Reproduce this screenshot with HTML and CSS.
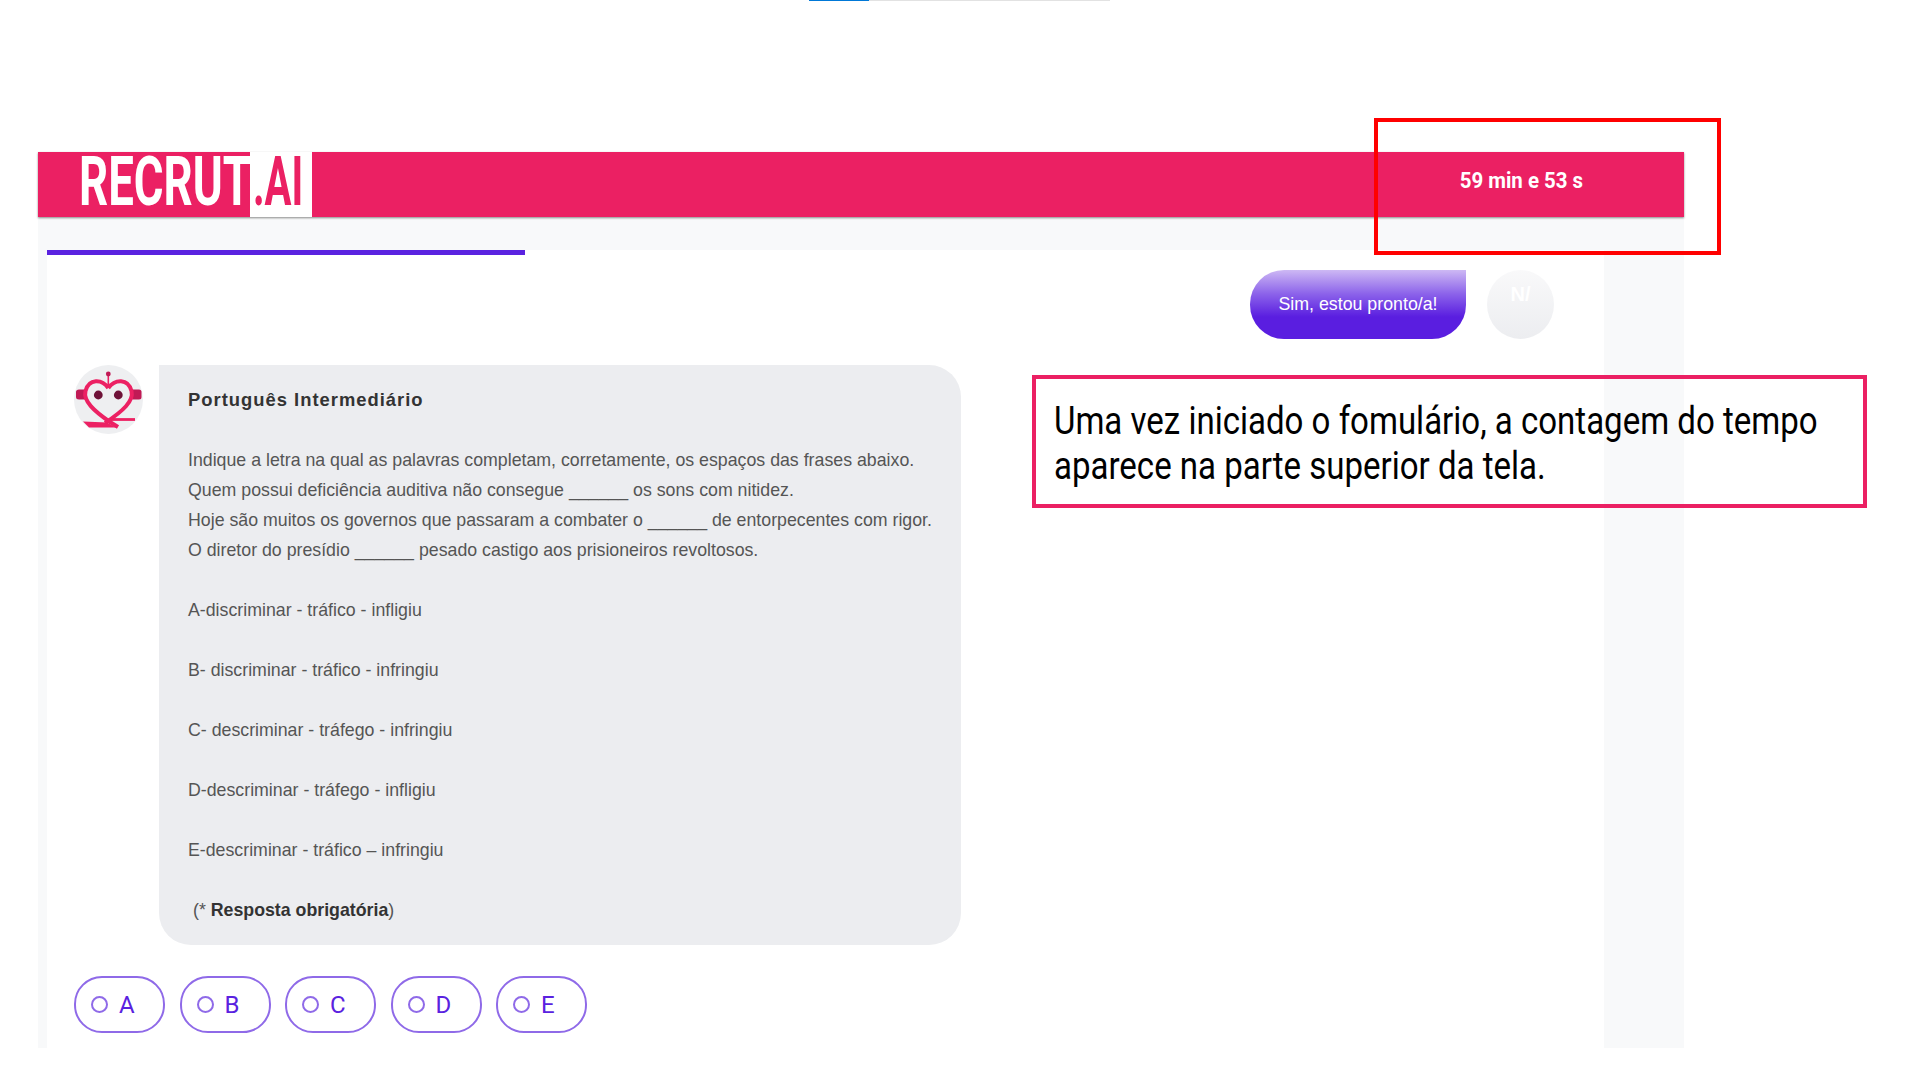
FILE: index.html
```html
<!DOCTYPE html>
<html lang="en">
<head>
    <meta charset="UTF-8">
    <title>Recrut.AI</title>
    <link rel="stylesheet" href="styles.css">
</head>
<body>
    <div class="loader"><div class="loader-fill"></div></div>

    <div class="app">
        <header class="app-header">
            <div class="logo"><span class="logo-main"><span class="logo-text">RECRUT</span></span><span class="logo-box"><span class="logo-text logo-ai">.AI</span></span></div>
            <div class="timer"><span class="timer-text">59 min e 53 s</span></div>
        </header>

        <main class="panel">
            <div class="progress"></div>

            <div class="replies">
                <button class="reply-yes">Sim, estou pronto/a!</button>
                <button class="reply-no">N/</button>
            </div>

            <div class="message">
                <svg class="avatar" viewBox="0 0 69 69">
                    <circle cx="34.5" cy="34.5" r="34.5" fill="#eeeff1"/>
                    <path d="M34.3 10V20" stroke="#ec2163" stroke-width="1.6"/>
                    <circle cx="34.3" cy="9" r="2.4" fill="#c01a55"/>
                    <path d="M2 27Q2 24.5 5 24.5H11V34.5H5Q2 34.5 2 32Z" fill="#c01a55"/>
                    <path d="M67.5 27Q67.5 24.5 65 24.5H58.5V34.5H65Q67.5 34.5 67.5 32Z" fill="#c01a55"/>
                    <path d="M34.3 23C28 14 15 13 11.5 26C9 36 20 46 36 57L44 62" fill="none" stroke="#ec2163" stroke-width="4"/>
                    <path d="M34.3 23C41 14 54 13 57.5 26C60 36 49 46 31 58" fill="none" stroke="#ec2163" stroke-width="4"/>
                    <path d="M9 56.5L33 57.5L42 62.5L15 62.5Z" fill="#ec2163"/>
                    <path d="M37 54.5H61" stroke="#ec2163" stroke-width="2.8"/>
                    <circle cx="24.3" cy="30" r="4.4" fill="#6e1238"/>
                    <circle cx="44.3" cy="30" r="4.4" fill="#6e1238"/>
                </svg>
                <div class="bubble">
                    <h3 class="bubble-title">Português Intermediário</h3>
                    <p>Indique a letra na qual as palavras completam, corretamente, os espaços das frases abaixo.<br>
                    Quem possui deficiência auditiva não consegue ______ os sons com nitidez.<br>
                    Hoje são muitos os governos que passaram a combater o ______ de entorpecentes com rigor.<br>
                    O diretor do presídio ______ pesado castigo aos prisioneiros revoltosos.</p>
                    <p>A-discriminar - tráfico - infligiu</p>
                    <p>B- discriminar - tráfico - infringiu</p>
                    <p>C- descriminar - tráfego - infringiu</p>
                    <p>D-descriminar - tráfego - infligiu</p>
                    <p>E-descriminar - tráfico – infringiu</p>
                    <p class="required">(* <strong>Resposta obrigatória</strong>)</p>
                </div>
            </div>

            <div class="options">
                <label class="option"><span class="radio"></span>A</label>
                <label class="option"><span class="radio"></span>B</label>
                <label class="option"><span class="radio"></span>C</label>
                <label class="option"><span class="radio"></span>D</label>
                <label class="option"><span class="radio"></span>E</label>
            </div>
        </main>
    </div>

    <div class="mark-timer"></div>
    <div class="note"><span class="note-text">Uma vez iniciado o fomulário, a contagem do tempo<br>aparece na parte superior da tela.</span></div>
</body>
</html>
```

FILE: styles.css
```css
body {
    margin: 0;
    background: #fff;
    font-family: "Liberation Sans", Arial, sans-serif;
}
.loader {
    width: 301px;
    height: 1px;
    margin-left: 809px;
    background: #e2e2e2;
}
.loader-fill {
    width: 60px;
    height: 1px;
    background: #0078d7;
}
.app {
    width: 1646px;
    height: 896px;
    margin: 151px 0 0 38px;
    background: #f8f9fa;
}
.app-header {
    display: flex;
    justify-content: space-between;
    height: 65px;
    background: #eb2063;
    box-shadow: 0 1px 2px rgba(0,0,0,0.45);
}
.logo {
    display: flex;
}
.logo-main {
    width: 212px;
    padding-left: 41px;
    box-sizing: border-box;
    color: #fff;
}
.logo-box {
    width: 62px;
    padding-left: 3px;
    box-sizing: border-box;
    background: #fff;
    color: #eb2063;
}
.logo-text {
    display: block;
    width: 300px;
    font-family: Roboto, sans-serif;
    font-weight: 700;
    font-size: 69px;
    line-height: 59px;
    transform: scaleX(0.66);
    transform-origin: left center;
}
.logo-ai {
    width: 100px;
    transform: scaleX(0.58);
}
.timer {
    width: 326px;
    color: #fff;
    font-family: Roboto, sans-serif;
    font-weight: 700;
    font-size: 22px;
    line-height: 58px;
    text-align: center;
}
.timer-text {
    display: inline-block;
    transform: scaleX(0.93);
}
.panel {
    height: 798px;
    margin: 33px 80px 0 9px;
    background: #fff;
}
.progress {
    width: 478px;
    height: 5px;
    background: #5a22e0;
}
.replies {
    display: flex;
    justify-content: flex-end;
    gap: 21px;
    margin-top: 15px;
    padding-right: 50px;
}
.reply-yes {
    width: 216px;
    height: 69px;
    border: none;
    border-radius: 34px 0 34px 34px;
    background: linear-gradient(#cdb8f4, #8b62ea 35%, #5a1ee0 68%);
    color: #fff;
    font-family: inherit;
    font-size: 17.8px;
}
.reply-no {
    width: 67px;
    height: 69px;
    padding: 0 0 20px;
    border: none;
    border-radius: 50%;
    background: linear-gradient(#f9f9fa, #ecedf0);
    color: #fff;
    font-family: inherit;
    font-size: 20px;
    font-weight: 700;
}
.message {
    display: flex;
    gap: 16px;
    margin: 26px 0 0 27px;
}
.avatar {
    width: 69px;
    height: 69px;
    flex: none;
}
.bubble {
    width: 802px;
    box-sizing: border-box;
    padding: 20px 29px;
    border-radius: 0 32px 32px 32px;
    background: #ecedf0;
    color: #555;
    font-size: 17.75px;
    line-height: 30px;
}
.bubble p {
    margin: 0 0 30px;
}
.bubble p.required {
    margin: 0 0 0 5px;
}
.bubble-title {
    margin: 0 0 30px;
    color: #333;
    font-size: 18.4px;
    line-height: 30px;
    letter-spacing: 1px;
}
.required strong {
    color: #333;
}
.options {
    display: flex;
    gap: 14.5px;
    margin: 31px 0 0 27px;
}
.option {
    display: flex;
    align-items: center;
    gap: 11px;
    width: 91px;
    height: 57px;
    box-sizing: border-box;
    padding-left: 15px;
    border: 2px solid #8f6ae8;
    border-radius: 28px;
    color: #5a22e0;
    font-family: Roboto, sans-serif;
    font-size: 24px;
}
.radio {
    width: 17px;
    height: 17px;
    box-sizing: border-box;
    border: 2px solid #8f6ae8;
    border-radius: 50%;
}
.mark-timer {
    position: absolute;
    left: 1374px;
    top: 118px;
    width: 347px;
    height: 137px;
    box-sizing: border-box;
    border: 4px solid #f00;
}
.note {
    position: absolute;
    left: 1032px;
    top: 375px;
    width: 835px;
    height: 133px;
    box-sizing: border-box;
    padding: 20px 18px;
    border: 4px solid #eb2063;
}
.note-text {
    display: block;
    width: 900px;
    color: #000;
    font-family: Roboto, sans-serif;
    font-size: 38px;
    line-height: 45px;
    transform: scaleX(0.869);
    transform-origin: left center;
}
```
